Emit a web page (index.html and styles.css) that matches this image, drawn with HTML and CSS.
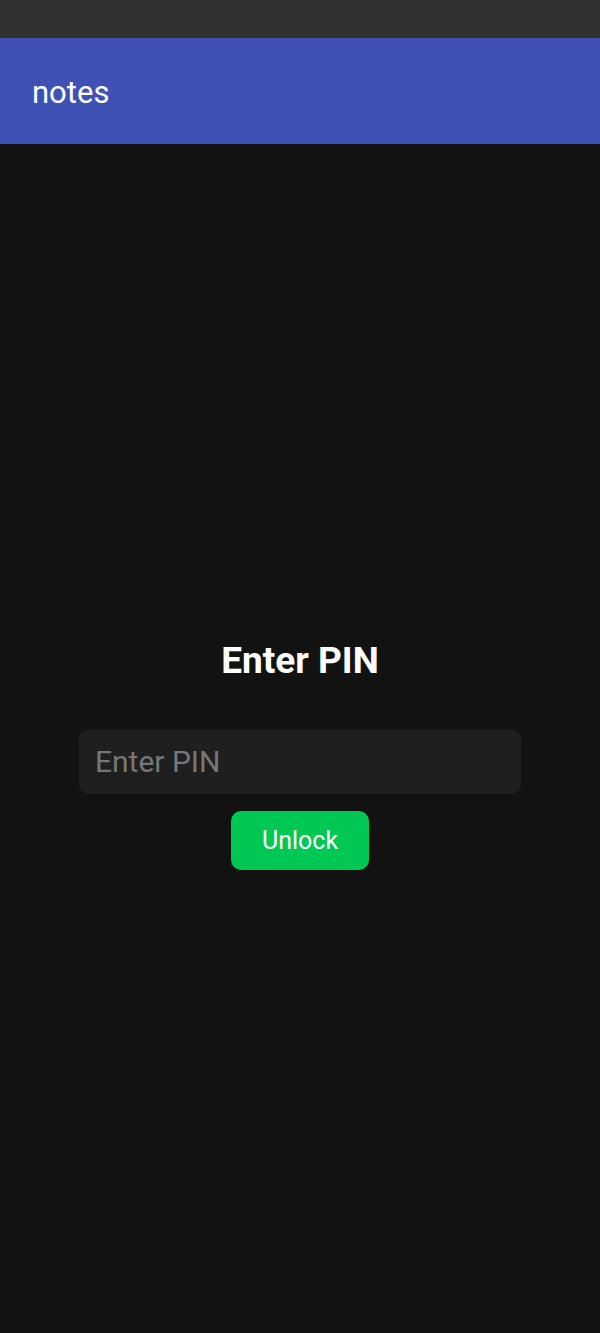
FILE: index.html
```html
<!DOCTYPE html>
<html>
  <head>
    <title>notes</title>
    <meta charset="UTF-8">
    <meta name="viewport" content="width=device-width, initial-scale=1">
    <link rel="stylesheet" href="styles.css">
  </head>
  <body>
    <div class="status-bar"></div>
    <div class="app-bar">
      <span class="app-title">notes</span>
    </div>
    <div class="lock-screen">
      <h1 class="lock-title">Enter PIN</h1>
      <input type="password" class="pin-input" placeholder="Enter PIN">
      <button class="unlock-btn">Unlock</button>
    </div>
  </body>
</html>
```

FILE: styles.css
```css
/* dark lock screen */
html, body {
	margin: 0;
	height: 100%;
}
body {
	font-family: Roboto, "Liberation Sans", Arial, sans-serif;
	background-color: #121212;
	color: #fff;
	display: flex;
	flex-direction: column;
}
.status-bar {
	height: 38px;
	background-color: #303030;
}
.app-bar {
	height: 106px;
	box-sizing: border-box;
	background-color: #3f51b5;
	display: flex;
	align-items: center;
	padding: 3px 0 0 32px;
}
.app-title {
	font-size: 31px;
}
.lock-screen {
	flex: 1;
	display: flex;
	flex-direction: column;
	align-items: center;
	padding-top: 495px;
}
.lock-title {
	margin: 0;
	font-size: 37px;
	font-weight: bold;
}
.pin-input {
	margin-top: 47px;
	width: 442px;
	height: 65px;
	box-sizing: border-box;
	padding: 0 16px;
	border: none;
	border-radius: 10px;
	background-color: #1f1f1f;
	color: #fff;
	font-family: inherit;
	font-size: 30px;
	outline: none;
}
.pin-input::placeholder {
	color: #777;
}
.unlock-btn {
	margin-top: 17px;
	width: 138px;
	height: 59px;
	border: none;
	border-radius: 10px;
	background-color: #00c853;
	color: #fff;
	font-family: inherit;
	font-size: 25px;
	cursor: pointer;
}
```
